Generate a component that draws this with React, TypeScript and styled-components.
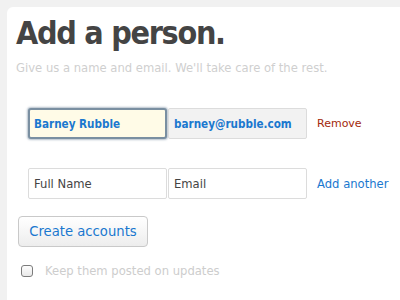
import React from "react";
import styled, { createGlobalStyle } from "styled-components";

const Global = createGlobalStyle`
  html, body { margin: 0; padding: 0; background: #f1f1f1; }
  body { font-family: "DejaVu Sans", Verdana, sans-serif; }
`;

const Panel = styled.main`
  margin: 7px 0 0 7px;
  min-height: 293px;
  box-sizing: border-box;
  background: #fff;
  border-top-left-radius: 6px;
  padding: 8px 0 0 9px;
`;

const Title = styled.h1`
  margin: 0;
  font-family: "DejaVu Sans Condensed", "DejaVu Sans", Verdana, sans-serif;
  font-stretch: condensed;
  font-weight: bold;
  font-size: 32px;
  line-height: 36px;
  letter-spacing: -1.3px;
  color: #444;
`;

const Subtitle = styled.p`
  margin: 9px 0 0;
  font-size: 11.6px;
  line-height: 16px;
  color: #cfcfcf;
`;

const Rows = styled.div`
  margin: 32px 0 0 12px;
  display: flex;
  flex-direction: column;
  gap: 29px;
`;

const Row = styled.div`
  display: flex;
  align-items: center;
`;

const Field = styled.div<{ $focused?: boolean; $filled?: boolean; $locked?: boolean }>`
  box-sizing: border-box;
  width: 139px;
  height: 31px;
  margin-right: 1px;
  display: flex;
  align-items: center;
  padding-left: 5px;
  border: 1px solid #dcdcdc;
  border-radius: 2px;
  background: ${(p) => (p.$focused ? "#fffbe7" : p.$locked ? "#f2f2f2" : "#fff")};
  color: ${(p) => (p.$filled ? "#1a78cf" : "#444")};
  font-family: ${(p) =>
    p.$filled ? '"DejaVu Sans Condensed", "DejaVu Sans", sans-serif' : '"DejaVu Sans", sans-serif'};
  font-stretch: ${(p) => (p.$filled ? "condensed" : "normal")};
  font-weight: ${(p) => (p.$filled ? "bold" : "normal")};
  font-size: 11.6px;
  ${(p) =>
    p.$focused &&
    `
    border: 2px solid #7a8fa1;
    border-radius: 3px;
    padding-left: 4px;
    box-shadow: 0 0 2px 1px rgba(120, 140, 160, 0.55);
  `}
`;

const RowLink = styled.a<{ $tone: "red" | "blue" }>`
  margin-left: 9px;
  font-size: ${(p) => (p.$tone === "red" ? "11px" : "11.6px")};
  color: ${(p) => (p.$tone === "red" ? "#a3290c" : "#1a78cf")};
  text-decoration: none;
  cursor: pointer;
`;

const Button = styled.button`
  margin: 17px 0 0 2px;
  box-sizing: border-box;
  width: 130px;
  height: 31px;
  padding: 0;
  border: 1px solid #c9c9c9;
  border-radius: 4px;
  background: linear-gradient(#ffffff, #ededed);
  color: #1a78cf;
  font-family: "DejaVu Sans", sans-serif;
  font-size: 13.2px;
  cursor: pointer;
`;

const CheckRow = styled.label`
  margin: 17px 0 0 5px;
  display: flex;
  align-items: center;
  gap: 12px;
  font-size: 11.6px;
  color: #cdcdcd;
`;

const Box = styled.span`
  box-sizing: border-box;
  width: 12px;
  height: 12px;
  border: 1px solid #7c7c7c;
  border-radius: 3px;
  background: linear-gradient(#fdfdfd, #e9e9e9);
`;

export default function App() {
  return (
    <>
      <Global />
      <Panel>
        <Title>Add a person.</Title>
        <Subtitle>Give us a name and email. We'll take care of the rest.</Subtitle>
        <Rows>
          <Row>
            <Field $focused $filled>Barney Rubble</Field>
            <Field $filled $locked>barney@rubble.com</Field>
            <RowLink $tone="red">Remove</RowLink>
          </Row>
          <Row>
            <Field>Full Name</Field>
            <Field>Email</Field>
            <RowLink $tone="blue">Add another</RowLink>
          </Row>
        </Rows>
        <Button>Create accounts</Button>
        <CheckRow>
          <Box />
          Keep them posted on updates
        </CheckRow>
      </Panel>
    </>
  );
}
